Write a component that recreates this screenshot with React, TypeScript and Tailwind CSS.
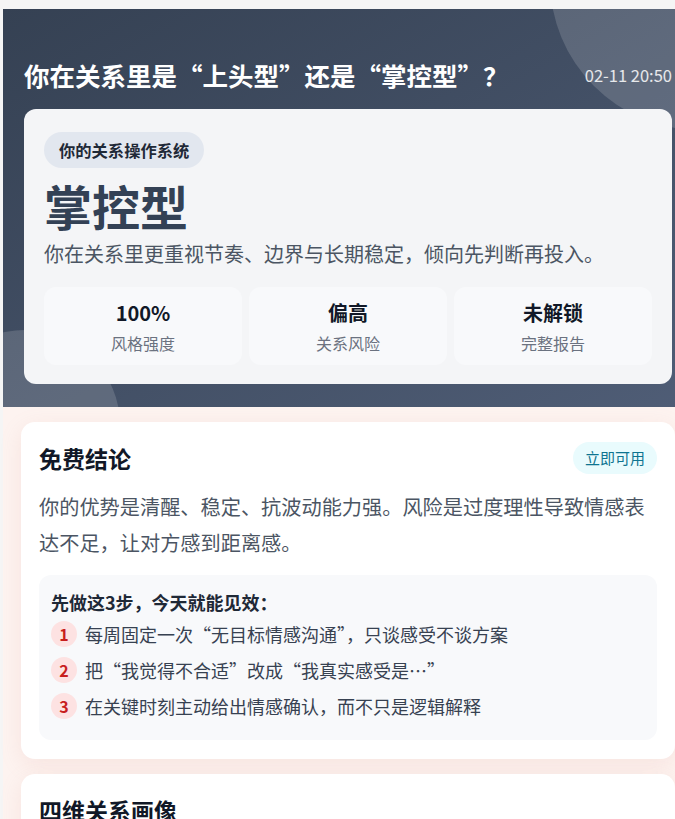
import React from "react";

const font = { fontFamily: '"Noto Sans CJK SC", "Noto Sans", sans-serif' };

function Stat({ value, label }: { value: string; label: string }) {
  return (
    <div className="flex h-[78px] flex-col items-center rounded-[12px] bg-[#f8f9fb] pt-[12px]">
      <div className="text-[20px] font-bold leading-[28px] text-[#111827]">{value}</div>
      <div className="mt-[4px] text-[16px] leading-[24px] text-[#6b7280]">{label}</div>
    </div>
  );
}

function Step({ n, text }: { n: number; text: string }) {
  return (
    <div className="flex h-9 items-center gap-[8px]">
      <div className="flex h-[26px] w-[26px] shrink-0 items-center justify-center rounded-full bg-[#fde2e2] text-[16px] font-bold text-[#c81e1e]">
        {n}
      </div>
      <div className="text-[18px] leading-[26px] text-[#374151]">{text}</div>
    </div>
  );
}

export default function App() {
  return (
    <div className="w-full overflow-hidden bg-[#f5f5f5] pt-[9px]" style={font}>
      <div className="ml-[3px] w-[690px]">
        <div className="relative overflow-hidden bg-gradient-to-br from-[#354153] to-[#4f5d76] px-[21px] pb-[23px] pt-[50px]">
          <div className="absolute left-[547px] top-[-179px] h-[300px] w-[300px] rounded-full bg-white/15" />
          <div className="absolute left-[-73px] top-[321px] h-[190px] w-[190px] rounded-full bg-white/15" />
          <div className="relative flex items-center justify-between">
            <h1 className="text-[25.5px] font-bold leading-[32px] text-white">
              你在关系里是“上头型”还是“掌控型”？
            </h1>
            <div className="text-[16.5px] leading-[32px] text-white/85">02-11 20:50</div>
          </div>
          <div className="relative mt-[18px] rounded-[12px] bg-[#f4f5f7] px-5 pb-[19px] pt-[23px]">
            <div className="inline-flex h-[36px] items-center rounded-full bg-[#e2e7ef] px-[15px] text-[16.3px] font-bold text-[#1f2937]">
              你的关系操作系统
            </div>
            <div className="mt-[9px] text-[48px] font-bold leading-[56px] text-[#334155]">掌控型</div>
            <div className="mt-[6px] text-[20px] leading-[30px] text-[#4b5563]">
              你在关系里更重视节奏、边界与长期稳定，倾向先判断再投入。
            </div>
            <div className="mt-[18px] grid grid-cols-3 gap-[7px]">
              <Stat value="100%" label="风格强度" />
              <Stat value="偏高" label="关系风险" />
              <Stat value="未解锁" label="完整报告" />
            </div>
          </div>
        </div>

        <div className="bg-[#fdf3f0] px-[18px] pb-10 pt-[15px]">
          <div className="rounded-[14px] bg-white px-[18px] pb-[19px] pt-[20px] shadow-[0_6px_22px_rgba(214,140,130,0.14)]">
            <div className="flex items-center justify-between">
              <h2 className="text-[23px] font-bold leading-[32px] text-[#111827]">免费结论</h2>
              <div className="flex h-[32px] items-center rounded-full bg-[#e9fbfd] px-[12px] text-[15px] text-[#0e7490]">
                立即可用
              </div>
            </div>
            <p className="mt-[15px] text-[20.2px] leading-[36px] text-[#4b5563]">
              你的优势是清醒、稳定、抗波动能力强。风险是过度理性导致情感表达不足，让对方感到距离感。
            </p>
            <div className="mt-[14px] rounded-[12px] bg-[#f8f9fb] px-[12px] pb-[16px] pt-[14px]">
              <div className="mb-px text-[18px] font-bold leading-[26px] text-[#1f2937]">
                先做这3步，今天就能见效：
              </div>
              <Step n={1} text="每周固定一次“无目标情感沟通”，只谈感受不谈方案" />
              <Step n={2} text="把“我觉得不合适”改成“我真实感受是…”" />
              <Step n={3} text="在关键时刻主动给出情感确认，而不只是逻辑解释" />
            </div>
          </div>

          <div className="mt-[15px] rounded-[14px] bg-white px-[18px] pb-[19px] pt-[20px] shadow-[0_6px_22px_rgba(214,140,130,0.14)]">
            <h2 className="text-[23px] font-bold leading-[32px] text-[#111827]">四维关系画像</h2>
            <div className="h-[200px]" />
          </div>
        </div>
      </div>
    </div>
  );
}
